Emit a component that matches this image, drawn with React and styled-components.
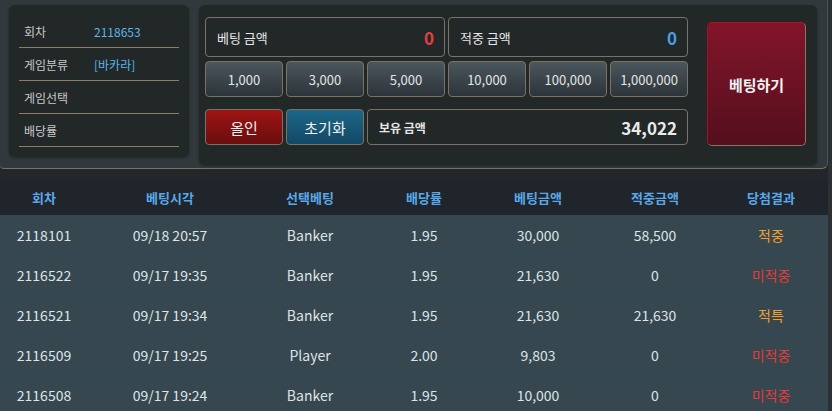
import React from "react";
import styled, { createGlobalStyle } from "styled-components";

const Global = createGlobalStyle`
  html, body { margin: 0; padding: 0; background: #2b3033; }
  body { font-family: "Noto Sans CJK KR", "Noto Sans", sans-serif; color: #e4e4e4; }
  * { box-sizing: border-box; }
`;

const Page = styled.div`
  width: 828px;
  height: 411px;
  overflow: hidden;
  background: #23272a;
`;

const Top = styled.div`
  display: flex;
  align-items: flex-start;
  gap: 10px;
  padding: 5px 10px 2px 9px;
  height: 169px;
  background: #31393c;
  border-bottom: 1px solid #7d725f;
  border-right: 1px solid #4a5357;
  border-bottom-right-radius: 6px;
  border-bottom-left-radius: 4px;
`;

const InfoPanel = styled.div`
  width: 180px;
  height: 152px;
  background: #222728;
  border-radius: 6px;
  padding: 10px 10px 0;
  box-shadow: 0 1px 3px rgba(0, 0, 0, 0.35);
`;

const InfoRow = styled.div`
  display: flex;
  align-items: center;
  height: 33px;
  border-bottom: 1px solid #8b7f6a;
  font-size: 12px;
`;

const InfoLabel = styled.span`
  width: 75px;
  padding-left: 5px;
  color: #c9c9c9;
`;

const InfoValue = styled.span`
  color: #5cb6e8;
`;

const BetPanel = styled.div`
  flex: 1;
  height: 160px;
  background: #222728;
  border-radius: 6px;
  padding: 12px 11px 0 6px;
  display: flex;
  gap: 19px;
  box-shadow: 0 1px 3px rgba(0, 0, 0, 0.35);
`;

const Controls = styled.div`
  width: 483px;
  display: grid;
  grid-template-columns: repeat(6, 1fr);
  grid-template-rows: 40px 36px 44px;
  column-gap: 3px;
  row-gap: 4px;
`;

const AmountBox = styled.div`
  grid-column: span ${(p) => p.span};
  display: flex;
  align-items: center;
  justify-content: space-between;
  padding: 0 10px 0 11px;
  border: 1px solid #7a7264;
  border-radius: 4px;
  background: #222728;
`;

const AmountLabel = styled.span`
  font-size: ${(p) => (p.small ? "12px" : "13px")};
  font-weight: ${(p) => (p.small ? 700 : 400)};
  color: #e6e6e6;
`;

const AmountValue = styled.span`
  font-size: 17px;
  font-weight: 700;
  color: ${(p) => p.color};
`;

const Chip = styled.button`
  font-family: inherit;
  font-size: 13px;
  color: #e4e4e4;
  border: 1px solid #7a7264;
  border-radius: 4px;
  background: linear-gradient(#4b565d, #2c3439);
  padding: 0;
  cursor: pointer;
`;

const ActionButton = styled.button`
  font-family: inherit;
  font-size: 15px;
  color: #f0f0f0;
  border: 1px solid #7a7264;
  border-radius: 4px;
  background: ${(p) =>
    p.tone === "red"
      ? "linear-gradient(#9e1414, #6a0e0e)"
      : "linear-gradient(#1d6788, #134865)"};
  padding: 0;
  margin-top: 8px;
  cursor: pointer;
`;

const BalanceBox = styled(AmountBox)`
  margin-top: 8px;
`;

const BetButton = styled.button`
  width: 99px;
  height: 124px;
  margin-top: 5px;
  font-family: inherit;
  font-size: 15px;
  font-weight: 700;
  color: #f2f2f2;
  border: 1px solid #8a7464;
  border-top-color: #b3121f;
  border-left-color: #a01222;
  border-radius: 5px;
  background: linear-gradient(#82142a, #550f1d);
  cursor: pointer;
`;

const Table = styled.div`
  margin-top: 10px;
`;

const cols = "88px 164px 116px 112px 116px 118px 114px";

const HeadRow = styled.div`
  display: grid;
  grid-template-columns: ${cols};
  height: 36px;
  align-items: center;
  background: #1f252b;
  font-size: 13px;
  font-weight: 700;
  color: #5aa8e8;
  text-align: center;
`;

const Row = styled.div`
  display: grid;
  grid-template-columns: ${cols};
  height: 40px;
  align-items: center;
  background: #37474f;
  border-bottom: 1px solid #2c4a5d;
  font-size: 14px;
  color: #dde4e8;
  text-align: center;
`;

const Result = styled.span`
  color: ${(p) => (p.win ? "#f0a030" : "#e23b3b")};
`;

const chips = ["1,000", "3,000", "5,000", "10,000", "100,000", "1,000,000"];

const rows = [
  ["2118101", "09/18 20:57", "Banker", "1.95", "30,000", "58,500", "적중", true],
  ["2116522", "09/17 19:35", "Banker", "1.95", "21,630", "0", "미적중", false],
  ["2116521", "09/17 19:34", "Banker", "1.95", "21,630", "21,630", "적특", true],
  ["2116509", "09/17 19:25", "Player", "2.00", "9,803", "0", "미적중", false],
  ["2116508", "09/17 19:24", "Banker", "1.95", "10,000", "0", "미적중", false],
];

export default function App() {
  return (
    <>
      <Global />
      <Page>
        <Top>
          <InfoPanel>
            <InfoRow>
              <InfoLabel>회차</InfoLabel>
              <InfoValue>2118653</InfoValue>
            </InfoRow>
            <InfoRow>
              <InfoLabel>게임분류</InfoLabel>
              <InfoValue>[바카라]</InfoValue>
            </InfoRow>
            <InfoRow>
              <InfoLabel>게임선택</InfoLabel>
            </InfoRow>
            <InfoRow>
              <InfoLabel>배당률</InfoLabel>
            </InfoRow>
          </InfoPanel>
          <BetPanel>
            <Controls>
              <AmountBox span={3}>
                <AmountLabel>베팅 금액</AmountLabel>
                <AmountValue color="#e24040">0</AmountValue>
              </AmountBox>
              <AmountBox span={3}>
                <AmountLabel>적중 금액</AmountLabel>
                <AmountValue color="#4a9fe2">0</AmountValue>
              </AmountBox>
              {chips.map((c) => (
                <Chip key={c}>{c}</Chip>
              ))}
              <ActionButton tone="red">올인</ActionButton>
              <ActionButton tone="blue">초기화</ActionButton>
              <BalanceBox span={4}>
                <AmountLabel small>보유 금액</AmountLabel>
                <AmountValue color="#eaeaea">34,022</AmountValue>
              </BalanceBox>
            </Controls>
            <BetButton>베팅하기</BetButton>
          </BetPanel>
        </Top>
        <Table>
          <HeadRow>
            <span>회차</span>
            <span>베팅시각</span>
            <span>선택베팅</span>
            <span>배당률</span>
            <span>베팅금액</span>
            <span>적중금액</span>
            <span>당첨결과</span>
          </HeadRow>
          {rows.map((r) => (
            <Row key={r[0]}>
              <span>{r[0]}</span>
              <span>{r[1]}</span>
              <span>{r[2]}</span>
              <span>{r[3]}</span>
              <span>{r[4]}</span>
              <span>{r[5]}</span>
              <Result win={r[7]}>{r[6]}</Result>
            </Row>
          ))}
        </Table>
      </Page>
    </>
  );
}
